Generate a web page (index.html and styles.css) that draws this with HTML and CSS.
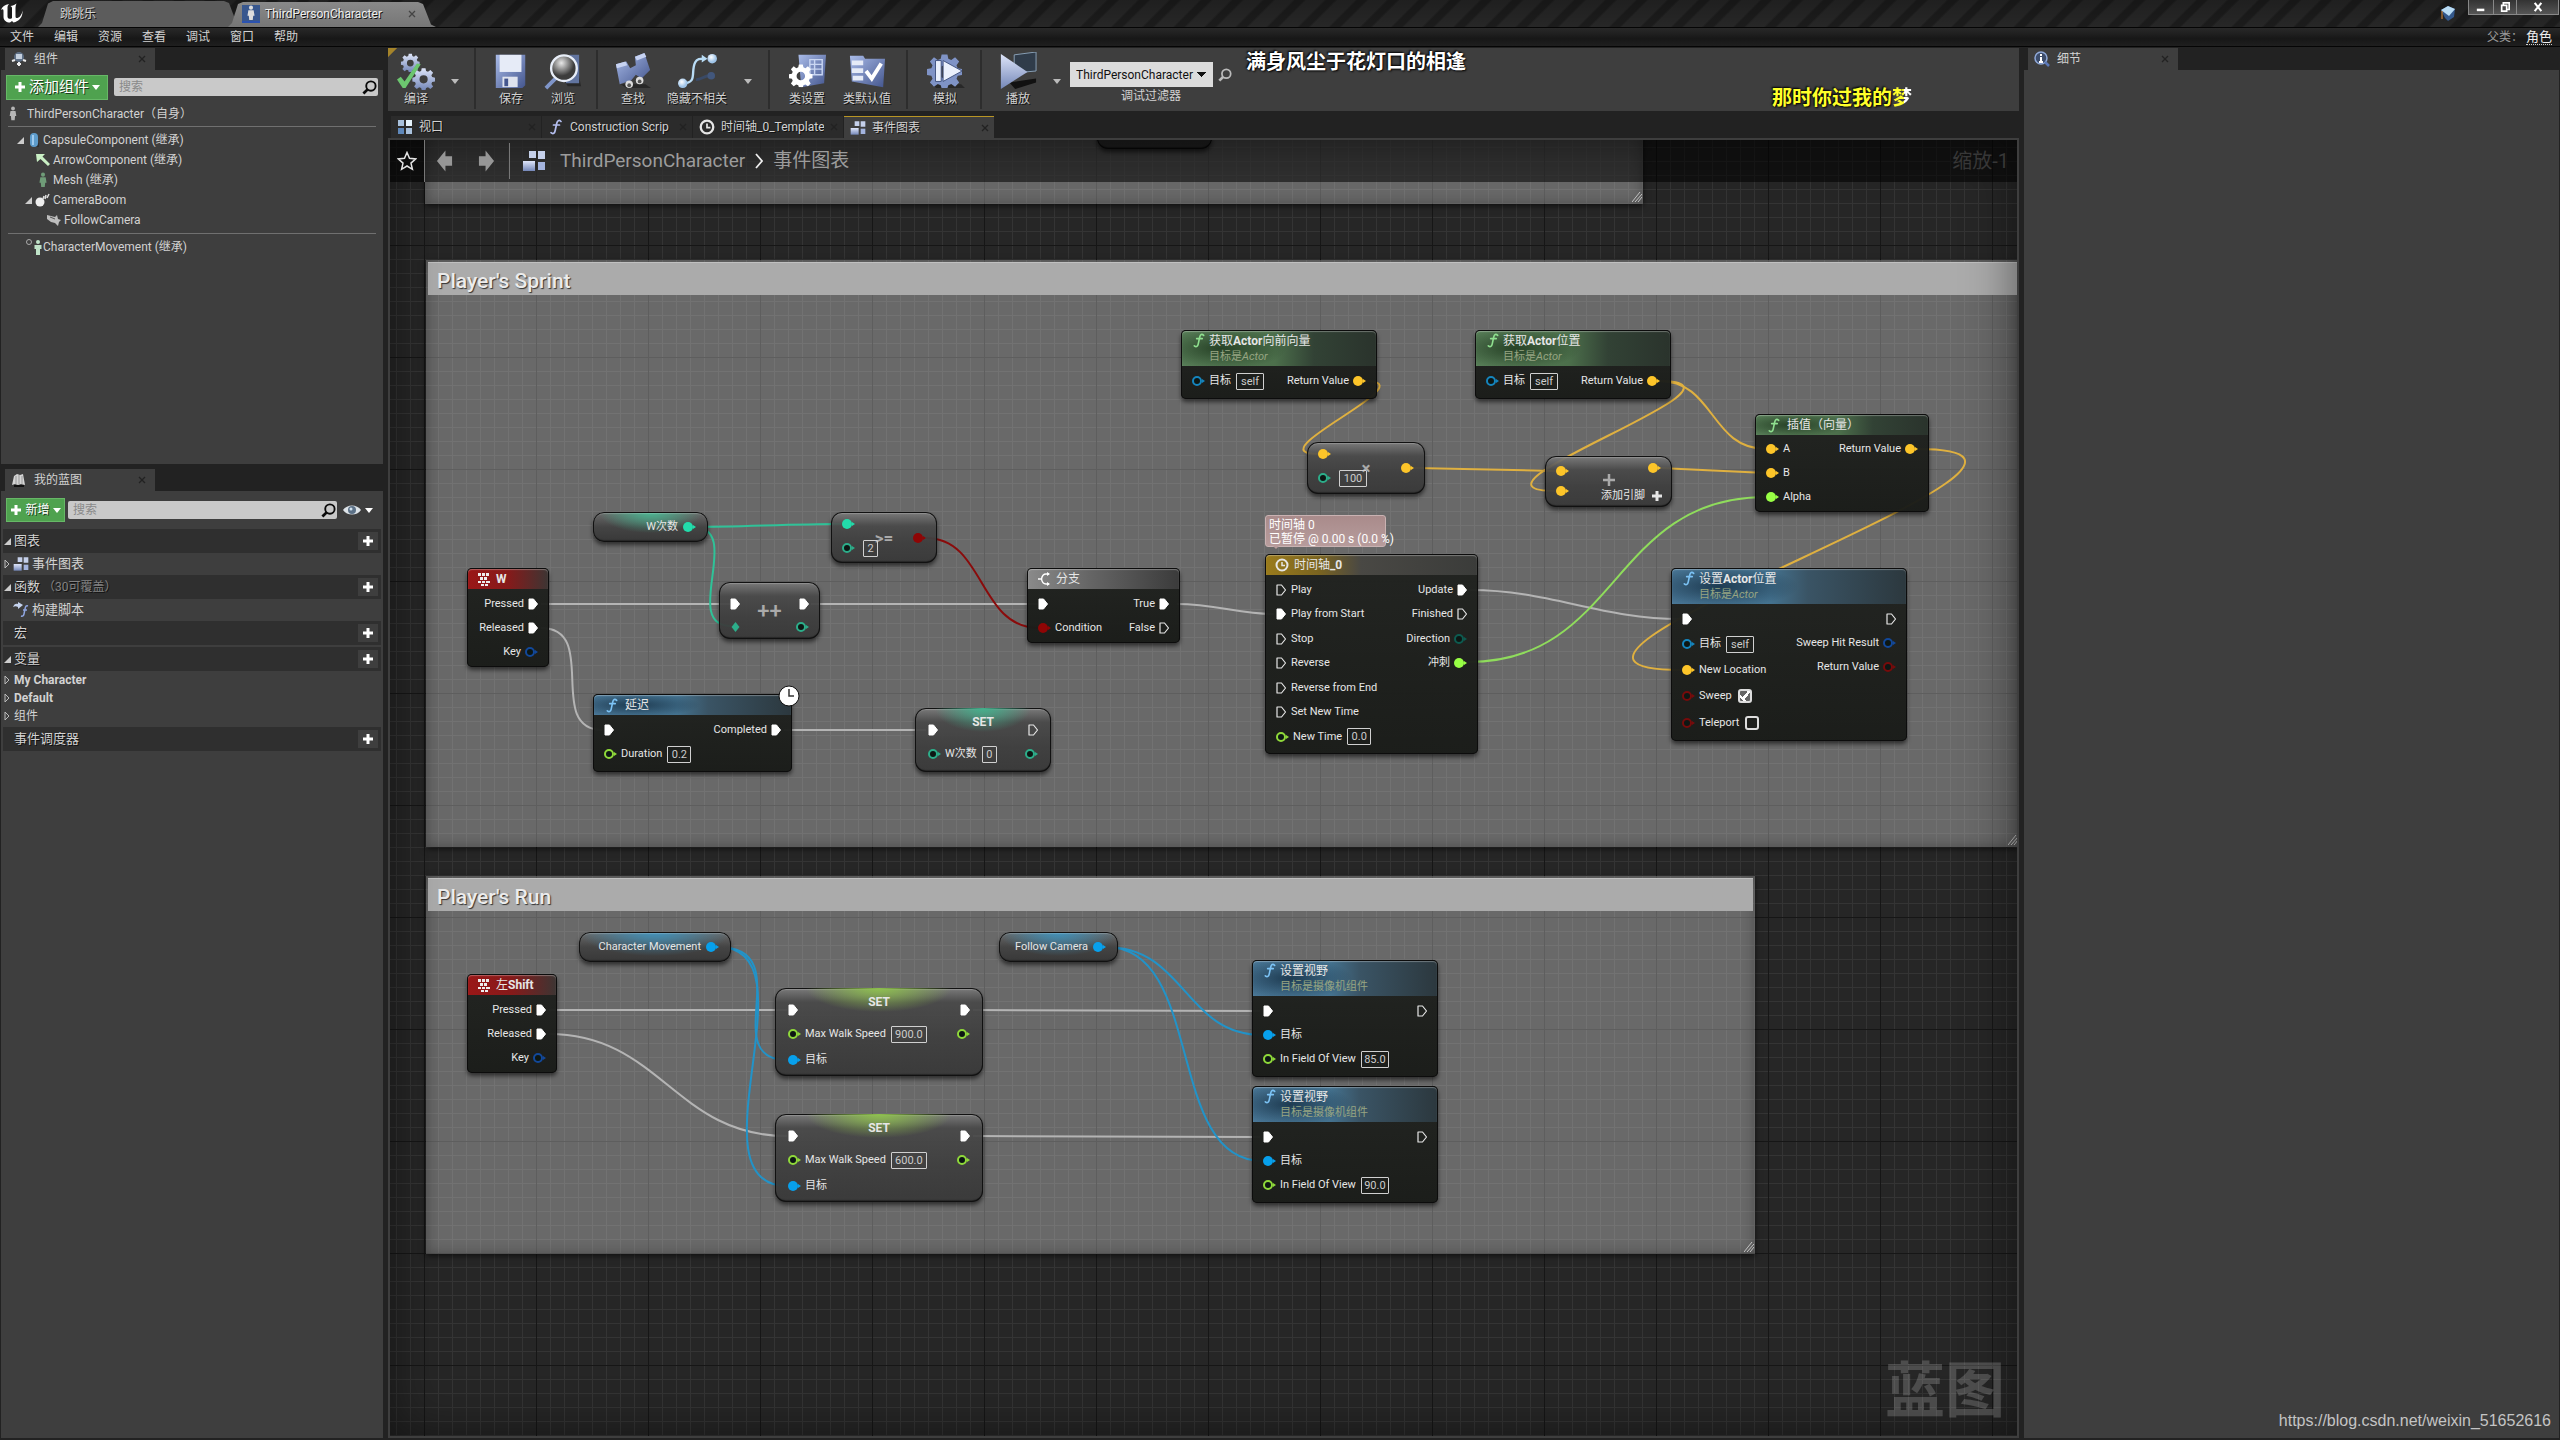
FILE: index.html
```html
<!DOCTYPE html>
<html lang="zh-CN">
<head>
<meta charset="utf-8">
<title>ThirdPersonCharacter</title>
<link rel="stylesheet" href="styles.css">
</head>
<body>
<svg class="defs" aria-hidden="true">
  <defs>
    <linearGradient id="steel" x1="0" y1="0" x2="0" y2="1"><stop offset="0" stop-color="#dfe6fa"/><stop offset="1" stop-color="#7487b8"/></linearGradient>
    <linearGradient id="blue" x1="0" y1="0" x2="1" y2="1"><stop offset="0" stop-color="#a9bbe8"/><stop offset="1" stop-color="#44568e"/></linearGradient>
    <radialGradient id="lens" cx=".4" cy=".3"><stop offset="0" stop-color="#e8e8e8"/><stop offset="1" stop-color="#3c3c3c"/></radialGradient>
    <radialGradient id="ball" cx=".4" cy=".35"><stop offset="0" stop-color="#fff"/><stop offset="1" stop-color="#9fc4e8"/></radialGradient>
  </defs>
  <symbol id="exec" viewBox="0 0 10 12"><path d="M1 1h4.500l4 5-4 5H1z" fill="#fff" stroke="#fff" stroke-linejoin="round"/></symbol>
  <symbol id="exec-open" viewBox="0 0 10 12"><path d="M1 1h4.500l4 5-4 5H1z" fill="none" stroke="#e8e8e8" stroke-width="1.200" stroke-linejoin="round"/></symbol>
  <symbol id="dot" viewBox="0 0 13 12"><circle cx="5" cy="6" r="5" fill="currentColor"/><path d="M10 4l3 2-3 2z" fill="currentColor"/></symbol>
  <symbol id="ring" viewBox="0 0 13 12"><circle cx="5" cy="6" r="4" fill="#0d1714" stroke="currentColor" stroke-width="2"/><path d="M10 4l3 2-3 2z" fill="currentColor"/></symbol>
  <symbol id="diamond" viewBox="0 0 13 12"><path d="M5.500 1l4 5-4 5-4-5z" fill="currentColor"/></symbol>
  <symbol id="func" viewBox="0 0 12 16"><path d="M11 2.500C9 .5 7.300 1.600 6.700 4.500L5.200 11.500C4.700 14.300 3.200 15.500 1 13.700M3.500 6h6" fill="none" stroke="currentColor" stroke-width="1.700" stroke-linecap="round"/></symbol>
  <symbol id="keys" viewBox="0 0 14 14"><path d="M1 1h3v3H1zM5 1h3v3H5zM9 1h3v3H9zM3 5h3v3H3zM7 5h3v3H7zM1 9h3v2H1zM5 9h3v2H5zM9 9h4v2H9zM4 12h3v2H4zM8 12h3v2H8z" fill="#eee"/></symbol>
  <symbol id="plus" viewBox="0 0 12 12"><path d="M4.500 1h3v3.500H11v3H7.500V11h-3V7.500H1v-3h3.500z" fill="currentColor"/></symbol>
  <symbol id="caret" viewBox="0 0 10 6"><path d="M0 0h10L5 6z" fill="currentColor"/></symbol>
  <symbol id="open" viewBox="0 0 8 8"><path d="M8 0v8H0z" fill="#ccc"/></symbol>
  <symbol id="closed" viewBox="0 0 6 10"><path d="M1 1l4 4-4 4z" fill="none" stroke="#bbb"/></symbol>
  <symbol id="close" viewBox="0 0 8 8"><path d="M1 1l6 6M7 1L1 7" stroke="currentColor" stroke-width="1.300"/></symbol>
  <symbol id="lookup" viewBox="0 0 16 16"><circle cx="9.500" cy="6.500" r="5" fill="none" stroke="currentColor" stroke-width="2"/><path d="M6 10l-4.500 4.500" stroke="currentColor" stroke-width="3"/></symbol>
  <symbol id="man" viewBox="0 0 12 18"><circle cx="6" cy="3" r="2.300" fill="currentColor"/><path d="M3 6h6l1 6H8.500L8 17H4l-.5-5H2z" fill="currentColor"/></symbol>
  <symbol id="graph" viewBox="0 0 24 22"><path d="M7 1h7v7H7zM16 1h7v8h-7z" fill="#c5d0ea"/><path d="M1 11h12v10H1z" fill="url(#steel)"/><path d="M16 12h7v8h-7z" fill="#a3b3dd"/></symbol>
  <symbol id="clock" viewBox="0 0 14 14"><circle cx="7" cy="7" r="5.500" fill="none" stroke="currentColor" stroke-width="2"/><path d="M7 4v3.500h3" fill="none" stroke="currentColor" stroke-width="1.500"/></symbol>
  <symbol id="grip" viewBox="0 0 10 10"><path d="M0 10L8 0M3 10l7-8M6 10l4-5" stroke="#c4c4c4" stroke-width="1"/></symbol>
  <symbol id="gear" viewBox="0 0 24 24"><path fill-rule="evenodd" d="M10 1h4l.6 3 2 .8L19.200 3 22 5.800l-1.800 2.600.8 2 3 .6v4l-3 .6-.8 2L22 20.200 19.200 23l-2.600-1.800-2 .8-.6 2h-4l-.6-2-2-.8L4.800 23 2 20.200l1.800-2.600-.8-2L0 15v-4l3-.6.8-2L2 5.800 4.800 3l2.600 1.800 2-.8zM12 8.500a4.300 4.300 0 100 8.600 4.300 4.300 0 000-8.600z"/></symbol>
</svg>

<header class="titlebar">
  <svg class="logo" viewBox="0 0 24 22"><path d="M1 8C2 4.500 5 2.500 9 2 7.500 3.500 7.500 5 7.500 6.500v8c0 2.500 3 3 4.500 1.500V6.500c0-1.500-.5-2-1.500-2.500 2-.2 4-1 6-2.500-.7 1.700-1 3-1 4.500v8.500c0 1.500 1.500 2 2.500 1.300C20 15 22 12.500 22.500 8.500 23 15 19 19.500 13.500 20.500L12 19l-2 1.500C6.500 20.500 3.500 18.500 3.500 15V9c0-2-1-2.500-2.500-1z" fill="#fff"/></svg>
  <nav class="windowtabs">
    <a class="wtab" href="#level">跳跳乐</a>
    <a class="wtab wtab-on" href="#character"><span class="thumb"><svg><use href="#man"/></svg></span>ThirdPersonCharacter<svg class="x"><use href="#close"/></svg></a>
  </nav>
  <svg class="cap" viewBox="0 0 18 18"><path d="M2 6l7-4 7 3-1 8-6 4-3-3z" fill="#33588c"/><path d="M2 6l7-4 7 3-6 7z" fill="#b9dcf5"/><path d="M3 7v8" stroke="#d98b3c"/></svg>
  <div class="winbtns">
    <button class="wb" aria-label="最小化"><svg viewBox="0 0 12 12"><path d="M1 8h9v3H1z" fill="#fff"/></svg></button><button class="wb wb-mid" aria-label="还原"><svg viewBox="0 0 12 12"><path d="M4 3V1h7v8H9M2 4h6v7H2z" fill="none" stroke="#fff" stroke-width="2"/></svg></button><button class="wb wb-close" aria-label="关闭"><svg viewBox="0 0 12 12"><path d="M2 1l8 10M10 1L2 11" stroke="#fff" stroke-width="2.500"/></svg></button>
  </div>
</header>

<nav class="menubar">
  <button>文件</button><button>编辑</button><button>资源</button><button>查看</button><button>调试</button><button>窗口</button><button>帮助</button>
  <span class="parent">父类： <a href="#parent">角色</a></span>
</nav>

<main class="workspace">
  <aside class="side">
    <section class="dock dock-components">
      <h2 class="docktab"><svg class="i16" viewBox="0 0 16 16"><circle cx="8" cy="6" r="5" fill="#5f7086"/><path d="M5 3h6v5H5z" fill="#c4cfdd"/><path d="M1 10l3-1M15 10l-3-1M8 11v4M6 13h4" stroke="#eee" stroke-width="2"/></svg>组件<svg class="x"><use href="#close"/></svg></h2>
      <div class="panel">
        <div class="panelbar">
          <button class="green green-lg"><svg class="i12"><use href="#plus"/></svg>添加组件<svg class="car"><use href="#caret"/></svg></button>
          <div class="search"><input type="text" placeholder="搜索" aria-label="搜索组件"><svg><use href="#lookup"/></svg></div>
        </div>
        <ul class="tree">
          <li class="root"><svg class="i-man pale"><use href="#man"/></svg>ThirdPersonCharacter（自身）</li>
          <li class="lv1"><svg class="tri"><use href="#open"/></svg><svg class="i14" viewBox="0 0 14 14"><path d="M7 3l5 8v3H6z" fill="#222" opacity=".6"/><rect x="3" y="0" width="8" height="14" rx="4" fill="#5e9ccb"/><path d="M6 2v10" stroke="#9fcbee" stroke-width="2"/></svg>CapsuleComponent (继承)</li>
          <li class="lv2"><svg class="i16" viewBox="0 0 16 14"><path d="M1 1h9L7.500 3.500 15 11l-2 2-7.500-7L2 9z" fill="#c9efc4"/></svg>ArrowComponent (继承)</li>
          <li class="lv2"><svg class="i16 mesh"><use href="#man"/></svg>Mesh (继承)</li>
          <li class="lv2 lv2-open"><svg class="tri"><use href="#open"/></svg><svg class="i16" viewBox="0 0 16 14"><circle cx="5" cy="9" r="4.500" fill="#eee"/><path d="M8 6l1-3M10 6l1-4M12 5l2-4" stroke="#ddd" stroke-width="1.500"/></svg>CameraBoom</li>
          <li class="lv3"><svg class="i16" viewBox="0 0 16 14"><path d="M1 2l8 2 2-2 1 4 3 1-2 2-1 4-3-3-4-1-4-3z" fill="#bdbdbd"/><path d="M4 4l5 2" stroke="#555"/></svg>FollowCamera</li>
          <li class="move"><svg class="i16" viewBox="0 0 16 16"><circle cx="3" cy="3" r="2.500" fill="none" stroke="#aaa"/><circle cx="12" cy="3" r="2" fill="#bfe3c8"/><path d="M8.500 6h7v4h-1.500v6h-4v-6H8.500z" fill="#bfe3c8"/></svg>CharacterMovement (继承)</li>
        </ul>
      </div>
    </section>
    <section class="dock dock-blueprint">
      <h2 class="docktab"><svg class="i16" viewBox="0 0 16 16"><path d="M1 13L3 4l3-2 3 1 3-1 2 11-4-1-3 1-3-1z" fill="#d5d5d5"/><path d="M3 14l10 0" stroke="#111" stroke-width="2"/><path d="M5 4v8M8 3v9M11 4v8" stroke="#999"/></svg>我的蓝图<svg class="x"><use href="#close"/></svg></h2>
      <div class="panel">
        <div class="panelbar panelbar-tall">
          <button class="green"><svg class="i12"><use href="#plus"/></svg>新增<svg class="car"><use href="#caret"/></svg></button>
          <div class="search"><input type="text" placeholder="搜索" aria-label="搜索蓝图"><svg><use href="#lookup"/></svg></div>
          <button class="eye" aria-label="视图选项"><svg class="eyeball" viewBox="0 0 18 12"><path d="M0 6C4 0 14 0 18 6c-4 6-14 6-18 0z" fill="#dde3e8"/><circle cx="9" cy="6" r="4" fill="#5c7187"/><circle cx="8" cy="5" r="1.500" fill="#cfe0ee"/></svg><svg class="car"><use href="#caret"/></svg></button>
        </div>
        <div class="cats">
          <h3><svg class="tri"><use href="#open"/></svg>图表<button aria-label="添加图表"><svg class="i12"><use href="#plus"/></svg></button></h3>
          <p class="entry"><svg class="shut"><use href="#closed"/></svg><svg class="i16"><use href="#graph"/></svg>事件图表</p>
          <h3><svg class="tri"><use href="#open"/></svg>函数<small>（30可覆盖）</small><button aria-label="添加函数"><svg class="i12"><use href="#plus"/></svg></button></h3>
          <p class="entry entry-fn"><svg class="i16" viewBox="0 0 16 16"><path d="M0 5C1 2 3 1 5 2V0l5 3-5 4V5C3 4 2 4 0 5z" fill="#c5d3ee"/><path d="M15 4c-2-.7-2.500.5-3 3l-1 5c-.4 2-1.500 2.500-3 2M10 8h4" fill="none" stroke="#8fa5e0" stroke-width="1.500"/></svg>构建脚本</p>
          <h3 class="plain last">宏<button aria-label="添加宏"><svg class="i12"><use href="#plus"/></svg></button></h3>
          <h3><svg class="tri"><use href="#open"/></svg>变量<button aria-label="添加变量"><svg class="i12"><use href="#plus"/></svg></button></h3>
          <p class="var"><svg class="shut"><use href="#closed"/></svg><b>My Character</b></p>
          <p class="var"><svg class="shut"><use href="#closed"/></svg><b>Default</b></p>
          <p class="var"><svg class="shut"><use href="#closed"/></svg>组件</p>
          <h3 class="plain">事件调度器<button aria-label="添加事件调度器"><svg class="i12"><use href="#plus"/></svg></button></h3>
        </div>
      </div>
    </section>
  </aside>

  <section class="editor">
    <div class="toolbar">
      <div class="tgroup first">
        <button class="tool t56"><svg viewBox="0 0 42 40"><g fill="url(#steel)"><use href="#gear" x="5" y="1" width="20" height="20"/><use href="#gear" x="17" y="16" width="24" height="24"/></g><path d="M1 29l4-3 4 5L22 12l4 1L10 38H7z" fill="#6cc66f"/></svg>编译</button>
        <button class="drop d22" aria-label="编译选项"><svg class="car"><use href="#caret"/></svg></button>
      </div>
      <div class="tgroup">
        <button class="tool t52"><svg viewBox="0 0 42 40"><path d="M5 3h31v32l-3 3H5z" fill="url(#blue)"/><path d="M9 3h23v18H9z" fill="#e6ebf7"/><path d="M12 26h16v11H12z" fill="#dfe3ee"/><path d="M14 28h4v8h-4z" fill="#44568e"/></svg>保存</button>
        <button class="tool t52"><svg viewBox="0 0 42 40"><path d="M20 26h18l2 10H26z" fill="#111" opacity=".5"/><path d="M28 3h10v30H24z" fill="#61749f"/><path d="M15 26L3 38" stroke="#7f95c9" stroke-width="4"/><circle cx="22" cy="17" r="13.500" fill="url(#lens)" stroke="#e8eef8" stroke-width="2.500"/></svg>浏览</button>
      </div>
      <div class="tgroup">
        <button class="tool t52"><svg viewBox="0 0 42 40"><path d="M8 34h26l6 4H14z" fill="#111" opacity=".5"/><path d="M3 13l11-3 4 7 6-3-1-9 10-4 6 18-9 9-6-4-5 6-12 4z" fill="url(#blue)"/><path d="M3 13l10-3 2 4-11 3zM23 5l10-4 2 4-10 4z" fill="#c7d3f2"/><circle cx="17" cy="34" r="4" fill="#ddd"/><circle cx="28" cy="30" r="4" fill="#ddd"/><circle cx="17" cy="35" r="2" fill="#555"/><circle cx="28" cy="31" r="2" fill="#555"/></svg>查找</button>
        <button class="tool t76"><svg viewBox="0 0 42 40"><path d="M6 33c16 0 8-12 13-22 2-4 5-4 10-4" fill="none" stroke="#b9dcf5" stroke-width="2.500"/><path d="M20 29c6 0 8-4 14-4" stroke="#3a4a66" stroke-width="3" fill="none"/><circle cx="36" cy="25" r="4" fill="#42577c"/><path d="M26 3l6 4-6 4z" fill="#b9dcf5"/><circle cx="6" cy="33" r="5" fill="url(#ball)"/><circle cx="37" cy="7" r="5" fill="url(#ball)"/></svg>隐藏不相关</button>
        <button class="drop d26" aria-label="隐藏选项"><svg class="car"><use href="#caret"/></svg></button>
      </div>
      <div class="tgroup">
        <button class="tool t56"><svg viewBox="0 0 42 40"><path d="M12 3h29l-2 30-24 4z" fill="url(#blue)"/><path d="M24 8h13v16H24zM24 13h13M24 18h13M29 8v16" fill="none" stroke="#c9d6f2" stroke-width="1.500"/><use href="#gear" x="2" y="12" width="25" height="25" fill="#fff"/></svg>类设置</button>
        <button class="tool t64"><svg viewBox="0 0 42 40"><path d="M3 4h14l2 3h21l-2 30L5 31z" fill="url(#blue)"/><path d="M5 9h12v5H5zM5 17h12v5H5zM6 25h11v5H6z" fill="#e6ebf7"/><path d="M20 20l6 8L36 12" fill="none" stroke="#fff" stroke-width="4"/></svg>类默认值</button>
      </div>
      <div class="tgroup">
        <button class="tool t56"><svg viewBox="0 0 42 40"><path d="M6 34h32l4 4H12z" fill="#111" opacity=".5"/><use href="#gear" x="2" y="1" width="37" height="37" fill="#7f93c6"/><path d="M11 9h6v22h-6zM19 9l20 11-20 11z" fill="#eaf0fc" stroke="#40527f"/></svg>模拟</button>
      </div>
      <div class="tgroup last">
        <button class="tool t52"><svg viewBox="0 0 42 40"><path d="M12 32l28-4v4l-22 7z" fill="#111"/><path d="M17 3l23-3v20l-23 2z" fill="#303c4a" stroke="#8ba2b8"/><path d="M3 2l28 19L3 39z" fill="url(#steel)"/></svg>播放</button>
        <button class="drop d26" aria-label="播放选项"><svg class="car"><use href="#caret"/></svg></button>
        <div class="filter"><div class="filterrow"><select id="dbg"><option>ThirdPersonCharacter</option></select><svg class="flens"><use href="#lookup"/></svg></div><label for="dbg">调试过滤器</label></div>
      </div>
      <p class="lyric lyric-a">满身风尘于花灯口的相逢</p>
      <p class="lyric lyric-b">那时你过我的<span>梦</span></p>
    </div>

    <nav class="doctabs">
      <a href="#viewport"><svg class="i16" viewBox="0 0 16 16"><path d="M1 1h6v6H1zM9 9h6v6H9z" fill="#a9c1dc"/><path d="M9 1h6v6H9z" fill="#e4f2fb"/><path d="M1 9h6v6H1z" fill="#5f88ba"/></svg><span>视口</span><svg class="x"><use href="#close"/></svg></a>
      <a href="#script"><svg class="i16 lilac"><use href="#func"/></svg><span>Construction Scrip</span><svg class="x"><use href="#close"/></svg></a>
      <a href="#timeline"><svg class="i16 white"><use href="#clock"/></svg><span>时间轴_0_Template</span><svg class="x"><use href="#close"/></svg></a>
      <a class="on" href="#graph"><svg class="i16"><use href="#graph"/></svg><span>事件图表</span><svg class="x"><use href="#close"/></svg></a>
    </nav>

    <div class="graph">
      <div class="board">
        <section class="comment c-top"><svg class="grip"><use href="#grip"/></svg></section>
        <section class="comment c-sprint"><h2>Player's Sprint</h2><svg class="grip"><use href="#grip"/></svg></section>
        <section class="comment c-run"><h2>Player's Run</h2><svg class="grip"><use href="#grip"/></svg></section>
        <div class="node soft n-stub"></div>

        <svg class="wires">
          <g stroke="#b4b4b4">
            <path d="M541 604H730M811 604H1038M784 730H926M549 1010H787M973 1010L1260 1011M973 1136L1260 1137"/>
            <path d="M541 628C600 628 545 729 602 730"/>
            <path d="M1177 604C1215 604 1240 614 1274 614"/>
            <path d="M1470 590C1550 590 1600 619 1681 619"/>
            <path d="M549 1034C660 1034 675 1136 787 1136"/>
          </g>
          <g stroke="#2fc298"><path d="M693 527C740 527 790 524 841 524"/><path d="M693 527C745 527 680 626 731 626"/></g>
          <path stroke="#8a0b0b" d="M926 538C985 538 978 627 1038 628"/>
          <g stroke="#dfb040">
            <path d="M1365 381C1430 381 1253 454 1318 454"/>
            <path d="M1659 381C1775 381 1440 491 1556 491"/>
            <path d="M1659 381C1715 381 1710 449 1766 449"/>
            <path d="M1414 468L1556 471M1660 468L1766 473"/>
            <path d="M1917 449C2150 449 1448 670 1681 670"/>
          </g>
          <path stroke="#8fdc5c" d="M1468 662C1620 662 1610 497 1766 497"/>
          <g stroke="#2293c8">
            <path d="M718 947C800 947 716 1060 787 1060"/>
            <path d="M718 947C818 947 687 1186 787 1186"/>
            <path d="M1106 947C1185 947 1185 1035 1262 1035"/>
            <path d="M1106 947C1205 947 1165 1161 1262 1161"/>
          </g>
        </svg>

        <article class="node n-w"><h4 class="red"><svg class="i14"><use href="#keys"/></svg><b>W</b></h4>
          <div class="body"><div class="outs"><p>Pressed<svg class="ex"><use href="#exec"/></svg></p><p>Released<svg class="ex"><use href="#exec"/></svg></p><p>Key<svg class="pt navy"><use href="#ring"/></svg></p></div></div></article>

        <article class="node soft getter g-teal n-count"><p>W次数<svg class="pt teal"><use href="#dot"/></svg></p></article>

        <article class="node soft op n-gte"><strong>&gt;=</strong><div class="body"><div class="ins"><p><svg class="pt teal"><use href="#dot"/></svg></p><p><svg class="pt tealring"><use href="#ring"/></svg><input class="w1 off" value="2" aria-label="B"></p></div><div class="outs mid"><p><svg class="pt red-pin"><use href="#dot"/></svg></p></div></div></article>

        <article class="node soft op n-inc"><strong class="big">++</strong><div class="body"><div class="ins"><p><svg class="ex"><use href="#exec"/></svg></p><p><svg class="pt tealring"><use href="#diamond"/></svg></p></div><div class="outs"><p><svg class="ex"><use href="#exec"/></svg></p><p><svg class="pt tealring"><use href="#ring"/></svg></p></div></div></article>

        <article class="node n-branch"><h4 class="gray"><svg class="i14" viewBox="0 0 14 14"><path d="M1 7h3M12 2H9C6 2 5 4 4.500 7 5 10 6 12 9 12h3" fill="none" stroke="#fff" stroke-width="1.500"/><path d="M10 0l3 2-3 2zM10 10l3 2-3 2z" fill="#fff"/></svg>分支</h4>
          <div class="body"><div class="ins"><p><svg class="ex"><use href="#exec"/></svg></p><p><svg class="pt red-pin"><use href="#dot"/></svg>Condition</p></div><div class="outs"><p>True<svg class="ex"><use href="#exec"/></svg></p><p>False<svg class="ex"><use href="#exec-open"/></svg></p></div></div></article>

        <article class="node n-delay"><h4 class="blue"><svg class="fn"><use href="#func"/></svg>延迟</h4>
          <div class="body"><div class="ins"><p><svg class="ex"><use href="#exec"/></svg></p><p><svg class="pt lime"><use href="#ring"/></svg><label for="dur">Duration</label><input id="dur" class="w3" value="0.2"></p></div><div class="outs"><p>Completed<svg class="ex"><use href="#exec"/></svg></p></div></div>
          <svg class="badge" viewBox="0 0 22 22"><circle cx="11" cy="11" r="10" fill="#fff" stroke="#111"/><path d="M11 4v7h5" fill="none" stroke="#333" stroke-width="1.500"/></svg></article>

        <article class="node soft set s-teal n-setw"><h5>SET</h5><div class="body"><div class="ins"><p><svg class="ex"><use href="#exec"/></svg></p><p><svg class="pt tealring"><use href="#ring"/></svg><label for="cnt">W次数</label><input id="cnt" class="w1" value="0"></p></div><div class="outs"><p><svg class="ex"><use href="#exec-open"/></svg></p><p><svg class="pt tealring"><use href="#ring"/></svg></p></div></div></article>

        <article class="node n-fwd"><h4 class="green-h two"><svg class="fn"><use href="#func"/></svg><span>获取<b>Actor</b>向前向量<small>目标是<i>Actor</i></small></span></h4>
          <div class="body"><div class="ins"><p><svg class="pt sky"><use href="#ring"/></svg><label for="s1">目标</label><input id="s1" class="w4" value="self"></p></div><div class="outs"><p>Return Value<svg class="pt gold"><use href="#dot"/></svg></p></div></div></article>

        <article class="node n-loc"><h4 class="green-h two"><svg class="fn"><use href="#func"/></svg><span>获取<b>Actor</b>位置<small>目标是<i>Actor</i></small></span></h4>
          <div class="body"><div class="ins"><p><svg class="pt sky"><use href="#ring"/></svg><label for="s2">目标</label><input id="s2" class="w4" value="self"></p></div><div class="outs"><p>Return Value<svg class="pt gold"><use href="#dot"/></svg></p></div></div></article>

        <article class="node soft op n-mul"><strong>×</strong><div class="body"><div class="ins"><p><svg class="pt gold"><use href="#dot"/></svg></p><p><svg class="pt tealring"><use href="#ring"/></svg><input class="w4 off" value="100" aria-label="倍数"></p></div><div class="outs mid"><p><svg class="pt gold"><use href="#dot"/></svg></p></div></div></article>

        <article class="node soft op n-add"><svg class="sum" viewBox="0 0 12 12"><path d="M6 0v12M0 6h12" stroke="#aaa" stroke-width="2.500"/></svg><div class="body"><div class="ins"><p><svg class="pt gold"><use href="#dot"/></svg></p><p><svg class="pt gold"><use href="#dot"/></svg></p></div><div class="outs"><p><svg class="pt gold"><use href="#dot"/></svg></p><button class="addpin">添加引脚<svg class="i12"><use href="#plus"/></svg></button></div></div></article>

        <div class="bubble">时间轴 0<br>已暂停 @ 0.00 s (0.0 %)</div>

        <article class="node n-time"><h4 class="amber"><svg class="i14"><use href="#clock"/></svg><span>时间轴<b>_0</b></span></h4>
          <div class="body"><div class="ins"><p><svg class="ex"><use href="#exec-open"/></svg>Play</p><p><svg class="ex"><use href="#exec"/></svg>Play from Start</p><p><svg class="ex"><use href="#exec-open"/></svg>Stop</p><p><svg class="ex"><use href="#exec-open"/></svg>Reverse</p><p><svg class="ex"><use href="#exec-open"/></svg>Reverse from End</p><p><svg class="ex"><use href="#exec-open"/></svg>Set New Time</p><p><svg class="pt lime"><use href="#ring"/></svg><label for="nt">New Time</label><input id="nt" class="w3" value="0.0"></p></div>
          <div class="outs"><p>Update<svg class="ex"><use href="#exec"/></svg></p><p>Finished<svg class="ex"><use href="#exec-open"/></svg></p><p>Direction<svg class="pt dteal"><use href="#ring"/></svg></p><p>冲刺<svg class="pt limefull"><use href="#dot"/></svg></p></div></div></article>

        <article class="node n-lerp"><h4 class="green-h"><svg class="fn"><use href="#func"/></svg>插值（向量）</h4>
          <div class="body"><div class="ins"><p><svg class="pt gold"><use href="#dot"/></svg>A</p><p><svg class="pt gold"><use href="#dot"/></svg>B</p><p><svg class="pt limefull"><use href="#dot"/></svg>Alpha</p></div><div class="outs"><p>Return Value<svg class="pt gold"><use href="#dot"/></svg></p></div></div></article>

        <article class="node n-setloc"><h4 class="blue two"><svg class="fn"><use href="#func"/></svg><span>设置<b>Actor</b>位置<small>目标是<i>Actor</i></small></span></h4>
          <div class="body"><div class="ins"><p><svg class="ex"><use href="#exec"/></svg></p><p><svg class="pt sky"><use href="#ring"/></svg><label for="s3">目标</label><input id="s3" class="w4" value="self"></p><p><svg class="pt gold"><use href="#dot"/></svg>New Location</p><p><svg class="pt maroon"><use href="#ring"/></svg><label for="sw">Sweep</label><input id="sw" type="checkbox" checked></p><p><svg class="pt maroon"><use href="#ring"/></svg><label for="tp">Teleport</label><input id="tp" type="checkbox"></p></div>
          <div class="outs"><p><svg class="ex"><use href="#exec-open"/></svg></p><p>Sweep Hit Result<svg class="pt navy"><use href="#ring"/></svg></p><p>Return Value<svg class="pt maroon"><use href="#ring"/></svg></p></div></div></article>

        <article class="node n-shift"><h4 class="red"><svg class="i14"><use href="#keys"/></svg><span>左<b>Shift</b></span></h4>
          <div class="body"><div class="outs"><p>Pressed<svg class="ex"><use href="#exec"/></svg></p><p>Released<svg class="ex"><use href="#exec"/></svg></p><p>Key<svg class="pt navy"><use href="#ring"/></svg></p></div></div></article>

        <article class="node soft getter g-blue n-cm"><p>Character Movement<svg class="pt azure"><use href="#dot"/></svg></p></article>
        <article class="node soft getter g-blue n-fc"><p>Follow Camera<svg class="pt azure"><use href="#dot"/></svg></p></article>

        <article class="node soft set s-lime n-set9"><h5>SET</h5><div class="body"><div class="ins"><p><svg class="ex"><use href="#exec"/></svg></p><p><svg class="pt lime"><use href="#ring"/></svg><label for="m9">Max Walk Speed</label><input id="m9" class="w5" value="900.0"></p><p><svg class="pt azure"><use href="#dot"/></svg>目标</p></div><div class="outs"><p><svg class="ex"><use href="#exec"/></svg></p><p><svg class="pt lime"><use href="#ring"/></svg></p></div></div></article>
        <article class="node soft set s-lime n-set6"><h5>SET</h5><div class="body"><div class="ins"><p><svg class="ex"><use href="#exec"/></svg></p><p><svg class="pt lime"><use href="#ring"/></svg><label for="m6">Max Walk Speed</label><input id="m6" class="w5" value="600.0"></p><p><svg class="pt azure"><use href="#dot"/></svg>目标</p></div><div class="outs"><p><svg class="ex"><use href="#exec"/></svg></p><p><svg class="pt lime"><use href="#ring"/></svg></p></div></div></article>

        <article class="node n-fov1"><h4 class="blue two"><svg class="fn"><use href="#func"/></svg><span>设置视野<small>目标是摄像机组件</small></span></h4>
          <div class="body"><div class="ins"><p><svg class="ex"><use href="#exec"/></svg></p><p><svg class="pt azure"><use href="#dot"/></svg>目标</p><p><svg class="pt lime"><use href="#ring"/></svg><label for="f1">In Field Of View</label><input id="f1" class="w4" value="85.0"></p></div><div class="outs"><p><svg class="ex"><use href="#exec-open"/></svg></p></div></div></article>
        <article class="node n-fov2"><h4 class="blue two"><svg class="fn"><use href="#func"/></svg><span>设置视野<small>目标是摄像机组件</small></span></h4>
          <div class="body"><div class="ins"><p><svg class="ex"><use href="#exec"/></svg></p><p><svg class="pt azure"><use href="#dot"/></svg>目标</p><p><svg class="pt lime"><use href="#ring"/></svg><label for="f2">In Field Of View</label><input id="f2" class="w4" value="90.0"></p></div><div class="outs"><p><svg class="ex"><use href="#exec-open"/></svg></p></div></div></article>
      </div>
      <div class="vignette"></div>
      <p class="stamp">蓝图</p>
      <div class="crumbs">
        <button class="star" aria-label="收藏"><svg viewBox="0 0 20 20"><path d="M10 1.500l2.500 5.800 6.300.6-4.800 4.200 1.400 6.200L10 15l-5.400 3.300L6 12.100 1.200 7.900l6.300-.6z" fill="none" stroke="#e5e5e5" stroke-width="1.500"/></svg></button>
        <div class="crumbrow">
          <button class="nav" aria-label="后退"><svg viewBox="0 0 18 22"><path d="M1 11L10 0v6h7v10h-7v6z" fill="#969696"/></svg></button>
          <button class="nav" aria-label="前进"><svg viewBox="0 0 18 22"><path d="M17 11L8 0v6H1v10h7v6z" fill="#969696"/></svg></button>
          <div class="path"><svg class="gi"><use href="#graph"/></svg><a href="#bp">ThirdPersonCharacter</a><svg class="chev" viewBox="0 0 8 16"><path d="M1 1l6 7-6 7" fill="none" stroke="#eee" stroke-width="1.800"/></svg><a href="#eg">事件图表</a></div>
          <span class="zoom">缩放-1</span>
        </div>
      </div>
    </div>
  </section>

  <aside class="details">
    <h2 class="docktab"><svg class="i16" viewBox="0 0 16 16"><circle cx="7" cy="7" r="6" fill="#3d4d6b" stroke="#8fa8d8" stroke-width="1.500"/><path d="M11 11l4 4" stroke="#5b78b8" stroke-width="2.500"/><path d="M7 3v2M6 7h1v4M5 11h4" stroke="#fff" stroke-width="2"/></svg>细节<svg class="x"><use href="#close"/></svg></h2>
    <div class="panel"><p class="source">https://blog.csdn.net/weixin_51652616</p></div>
  </aside>
</main>
</body>
</html>
```
FILE: styles.css
```css
* { box-sizing: border-box; }
html, body { height: 100%; }
body {
  margin: 0;
  display: flex;
  flex-direction: column;
  background: #222;
  color: #d2d2d2;
  font: 12px/16px Roboto, "Noto Sans CJK SC", sans-serif;
  overflow: hidden;
}
h2, h3, h4, h5, p, ul { margin: 0; padding: 0; font-size: inherit; font-weight: 400; }
ul { list-style: none; }
a { color: inherit; text-decoration: none; }
button, input, select { font: inherit; color: inherit; padding: 0; margin: 0; border: 0; background: none; }
svg { display: block; flex: none; }
.defs { position: absolute; width: 0; height: 0; }
.i12 { width: 12px; height: 12px; }
.i14 { width: 14px; height: 14px; }
.i16 { width: 16px; height: 16px; }
.x { width: 8px; height: 8px; color: #222; margin-left: auto; }
.car { width: 8px; height: 5px; }
.tri { width: 7px; height: 7px; }
.shut { width: 6px; height: 10px; }

/* window title bar */
.titlebar {
  flex: none;
  display: flex;
  height: 27px;
  background: linear-gradient(to bottom, rgba(0,0,0,.2), transparent), repeating-linear-gradient(135deg, #272727 0 12px, #1c1c1c 14px 20px, #272727 22px);
}
.logo { width: 24px; height: 22px; margin-top: 2px; }
.windowtabs { display: flex; margin-left: 14px; padding-top: 1px; }
.wtab {
  display: flex;
  align-items: center;
  width: 200px;
  padding: 0 16px 0 22px;
  clip-path: polygon(0 100%, 4px 85%, 10px 10%, 15px 0, 186px 0, 191px 8%, 200px 100%);
  background: #5c5c5c;
  text-shadow: 1px 1px 0 #111;
}
.wtab-on {
  width: 208px;
  margin-left: -10px;
  padding: 0 20px 0 14px;
  clip-path: polygon(0 100%, 4px 85%, 10px 12%, 15px 4%, 190px 4%, 195px 12%, 203px 90%, 208px 100%);
  background: linear-gradient(#8a8a8a, #767676);
  color: #eee;
}
.wtab-on .x { color: #444; }
.thumb { display: flex; justify-content: center; width: 18px; height: 18px; margin-right: 5px; background: #38578e; border-bottom: 2px solid #2b52b0; color: #ddd; }
.thumb svg { width: 12px; height: 16px; }
.cap { width: 18px; height: 18px; margin: 4px 11px 0 auto; }
.winbtns { display: flex; margin-right: 1px; }
.wb { display: flex; align-items: center; justify-content: center; width: 26px; height: 15px; border: 1px solid #888; border-top: 0; background: linear-gradient(#333, #555); }
.wb-mid { width: 23px; border-left: 0; }
.wb-close { width: 42px; border-left: 0; }
.wb svg { width: 10px; height: 10px; }

.menubar {
  flex: none;
  display: flex;
  align-items: center;
  height: 20px;
  border: solid #050505;
  border-width: 1px 0;
  background: linear-gradient(#292929, #171717 60%, #1f1f1f);
}
.menubar button { width: 44px; }
.parent { margin-left: auto; padding-right: 8px; color: #999; }
.parent a { color: #eee; font-size: 13px; border-bottom: 1px dotted #ccc; }

.workspace {
  flex: 1;
  min-height: 0;
  display: grid;
  grid-template-columns: 382px minmax(0, 1fr) 535px;
  gap: 5px;
  padding: 1px 1px 2px;
}

/* docked panels */
.side { display: flex; flex-direction: column; gap: 5px; min-height: 0; }
.dock { display: flex; flex-direction: column; }
.dock-components { height: 416px; }
.dock-blueprint { flex: 1; }
.docktab {
  display: flex;
  align-items: center;
  gap: 7px;
  width: 150px;
  height: 22px;
  margin-left: 4px;
  padding: 0 9px 0 6px;
  background: #3e3e3e;
}
.panel { flex: 1; background: #3e3e3e; }
.panelbar { display: flex; align-items: center; gap: 6px; height: 33px; padding: 1px 5px 0; }
.panelbar-tall { height: 38px; gap: 3px; padding-top: 0; }
.green {
  display: flex;
  align-items: center;
  justify-content: center;
  gap: 3px;
  width: 59px;
  height: 24px;
  background: #4fa24f;
  border: 1px solid #67b867;
  color: #fff;
  text-shadow: 1px 1px 0 #1c3c1c;
}
.green-lg { width: 102px; height: 25px; font-size: 15px; }
.search { flex: 1; display: flex; align-items: center; height: 18px; padding: 0 1px 0 5px; background: #c9c9c9; border-radius: 2px; color: #0a0a0a; }
.search input { flex: 1; min-width: 0; outline: 0; }
.search input::placeholder { color: #8a8a8a; opacity: 1; }
.search svg { width: 15px; height: 15px; }
.eye { display: flex; align-items: center; gap: 4px; width: 35px; margin-left: 3px; color: #fff; }
.eyeball { width: 18px; height: 12px; }

.tree { margin-top: -2px; }
.tree li { display: flex; align-items: center; height: 20px; }
.tree svg { margin-right: 2px; }
.tree .tri { margin-right: 3px; }
.tree .root { height: 26px; margin: 0 7px; border-bottom: 1px solid #707070; }
.root + li { margin-top: 3px; }
.tree .i-man { width: 10px; height: 15px; margin-right: 9px; }
.pale { color: #b5b5b5; }
.mesh { color: #6f9c78; }
.tree .lv1 { padding-left: 16px; }
.lv2 { padding-left: 34px; }
.tree .lv2-open { padding-left: 24px; }
.tree .lv3 { padding-left: 45px; }
.tree .move { height: 26px; margin: 3px 7px 0; padding-left: 18px; border-top: 1px solid #707070; }
.tree .move svg { margin-right: 1px; }

.cats { padding: 0 2px; }
.cats h3 { display: flex; align-items: center; gap: 3px; height: 24px; padding: 0 3px 0 1px; background: #2f2f2f; font-size: 13px; text-shadow: 1px 1px 0 #111; }
.cats h3.plain { padding-left: 11px; }
.cats h3.last { margin-bottom: 2px; }
.cats h3 small { font-size: 12px; color: #828282; }
.cats h3 button { display: flex; align-items: center; justify-content: center; width: 20px; height: 18px; margin-left: auto; background: #3e3e3e; color: #fff; }
.entry { display: flex; align-items: center; gap: 3px; height: 22px; padding-left: 1px; font-size: 13px; }
.entry-fn { padding-left: 10px; }
.var { display: flex; align-items: center; gap: 4px; height: 18px; padding-left: 1px; }
.var b { font-weight: 700; }
.cats .var + h3 { margin-top: 2px; }

/* toolbar */
.editor { display: flex; flex-direction: column; min-height: 0; }
.toolbar { position: relative; display: flex; height: 63px; background: #3e3e3e; }
.tgroup { display: flex; padding: 0 7px 0 9px; margin: 2px 0; border-right: 2px solid #2d2d2d; }
.tgroup.first { padding: 2px 8px 0 0; margin-top: 0; background: linear-gradient(135deg, #a5842a 6px, transparent 7px); }
.tgroup.last { padding-left: 10px; border: 0; }
.tool { display: flex; flex-direction: column; align-items: center; gap: 1px; padding-top: 2px; text-shadow: 1px 1px 0 #111; }
.tool svg { width: 40px; height: 38px; }
.t52 { width: 52px; }
.t56 { width: 56px; }
.t64 { width: 64px; }
.t76 { width: 76px; }
.drop { display: flex; align-items: center; justify-content: center; padding-top: 4px; color: #bbb; }
.d22 { width: 22px; }
.d26 { width: 26px; }
.filter { display: flex; flex-direction: column; gap: 1px; padding-top: 12px; }
.filterrow { display: flex; align-items: center; gap: 5px; }
.filter select {
  appearance: none;
  width: 143px;
  height: 25px;
  padding-left: 6px;
  color: #111;
  background: conic-gradient(from -45deg at 50% 100%, #111 90deg, transparent 0) 127px 10px / 9px 5px no-repeat, #dcdcdc;
  background: conic-gradient(from 135deg at 50% 0, transparent 0) 0 0 / 0 0, conic-gradient(from -45deg at 50% 100%, #111 90deg, transparent 0) 127px 10px / 9px 5px no-repeat, #dcdcdc;
}
.flens { width: 14px; height: 14px; color: #bbb; }
.filter label { text-align: center; }
.lyric { position: absolute; font-size: 20px; line-height: 26px; font-weight: 700; color: #fff; text-shadow: 1px 1px 2px #000, -1px -1px 2px #000; }
.lyric-a { left: 858px; top: 1px; }
.lyric-b { left: 1384px; top: 37px; color: #ffff2a; }
.lyric-b span { background: linear-gradient(to right, #ffff2a 60%, #fff 60%); background-clip: text; color: transparent; text-shadow: none; }

.doctabs { display: flex; gap: 1px; height: 27px; padding: 5px 0 0 3px; }
.doctabs a { display: flex; align-items: center; gap: 6px; width: 150px; padding: 0 5px 0 6px; background: #2b2b2b; text-shadow: 1px 1px 0 #111; }
.doctabs span { flex: 1; min-width: 0; overflow: hidden; white-space: nowrap; }
.doctabs .on { background: #3e3e3e; border-top: 1px solid #b89525; }
.lilac { color: #b5bff0; }
.white { color: #e6e6e6; }

/* graph canvas */
.graph {
  flex: 1;
  position: relative;
  overflow: hidden;
  border: 2px solid #3e3e3e;
  background:
    linear-gradient(to right, #161616 1px, transparent 1px) 34px 0 / 112px 112px,
    linear-gradient(to bottom, #161616 1px, transparent 1px) 0 105px / 112px 112px,
    linear-gradient(to right, #343434 1px, transparent 1px) 6px 0 / 14px 14px,
    linear-gradient(to bottom, #343434 1px, transparent 1px) 0 7px / 14px 14px,
    #262626;
}
/* pan offset of the graph's world origin */
.board { position: absolute; inset: -140px 0 0 -390px; }
.vignette { position: absolute; inset: 0; box-shadow: inset 0 0 50px rgba(0,0,0,.5); pointer-events: none; }
.wires { position: absolute; inset: 0; width: 100%; height: 100%; fill: none; stroke-width: 2; }
.stamp { position: absolute; right: 12px; bottom: 8px; font-size: 60px; line-height: 72px; font-weight: 700; color: rgba(255,255,255,.18); }

.crumbs { position: relative; display: flex; height: 42px; }
.star { display: flex; align-items: center; justify-content: center; width: 35px; background: rgba(0,0,0,.6); border-right: 1px solid #777; }
.star svg { width: 20px; height: 20px; }
.crumbrow { flex: 1; display: flex; align-items: center; background: rgba(0,0,0,.55); }
.nav { width: 42px; display: flex; justify-content: center; padding-right: 4px; }
.nav svg { width: 17px; height: 22px; }
.path { display: flex; align-items: center; height: 36px; padding-left: 12px; border-left: 1px solid #777; font-size: 19px; color: #9c9c9c; }
.gi { width: 24px; height: 22px; margin-right: 14px; }
.chev { width: 8px; height: 16px; margin: 0 10px; }
.zoom { margin-left: auto; padding-right: 8px; font-size: 20px; color: #373737; }

.comment {
  position: absolute;
  background: rgba(255,255,255,.31);
  box-shadow: 0 2px 6px rgba(0,0,0,.6), inset 0 0 14px rgba(0,0,0,.3);
  padding: 2px;
}
.comment h2 { height: 33px; padding: 3px 9px; font-size: 21px; line-height: 30px; font-weight: 500; color: #ececec; background: #ababab; text-shadow: 1px 1px 1px #333; border-top: 1px solid #c0c0c0; }
.grip { position: absolute; right: 1px; bottom: 2px; width: 10px; height: 10px; }
.c-top { left: 425px; top: 100px; width: 1218px; height: 104px; }
.c-sprint { left: 426px; top: 260px; width: 1593px; height: 587px; }
.c-run { left: 426px; top: 876px; width: 1329px; height: 378px; }

/* nodes */
.node {
  position: absolute;
  display: flex;
  flex-direction: column;
  border-radius: 5px;
  background: linear-gradient(rgba(32,34,31,.96), rgba(25,27,24,.97));
  box-shadow: inset 0 0 0 1px #0c0c0c, 0 3px 4px rgba(0,0,0,.55);
  color: #e6e6e6;
  font-size: 11px;
  white-space: nowrap;
}
.node.soft { border-radius: 11px; background: linear-gradient(rgba(125,125,125,.9), rgba(72,72,72,.92) 14px, rgba(62,62,62,.94) 60%, rgba(56,56,56,.95)); box-shadow: inset 0 0 0 1px #111, inset 0 2px 1px rgba(255,255,255,.2), inset 0 -2px 1px rgba(0,0,0,.35), 0 3px 4px rgba(0,0,0,.55); }
.node h4 { display: flex; align-items: center; gap: 5px; height: 20px; padding: 0 9px; margin: 1px 1px 0; font-size: 12px; border-radius: 4px 4px 0 0; box-shadow: inset 0 1px 1px rgba(255,255,255,.3); }
.node h4 b, .node h4 i { line-height: 14px; }
.node b { font-weight: 700; }
.node h4.two { height: 35px; align-items: flex-start; padding-top: 2px; gap: 3px; }
.node small { display: block; font-size: 11px; color: #97a582; }
.fn { width: 12px; height: 15px; }
.node .fn { margin-left: 3px; margin-right: 2px; }
.node .two .fn { margin-left: 2px; margin-right: 1px; }
.red { background: linear-gradient(to right, #9a1717, #861a1a 50%, #3d3533); }
.gray { background: linear-gradient(to right, #8a8a8a, #666 40%, #3b3b3b); }
.amber { background: linear-gradient(to right, #9a7b1c, #7a6420 25%, #494844 45%, #3b3c3a); }
.blue { background: radial-gradient(ellipse 34% 60% at 20% 50%, rgba(20,45,65,.8), transparent), linear-gradient(to right, #4a7898, #44728f 42%, #3a5465 58%, #2c383e); }
.blue .fn { color: #7cc3f5; }
.green-h { background: radial-gradient(ellipse 34% 60% at 20% 50%, rgba(28,52,28,.8), transparent), linear-gradient(to right, #598059, #4c6f4b 48%, #324235 68%, #2a332c); }
.green-h .fn { color: #8fe08f; }

.body { display: flex; justify-content: space-between; padding: 3px 11px 0; }
.body p { display: flex; align-items: center; gap: 5px; height: 24px; }
.outs { margin-left: auto; }
.outs p { justify-content: flex-end; gap: 4px; }
.ex { width: 10px; height: 12px; }
.pt { width: 13px; height: 12px; }
.ins .pt { margin-right: -1px; }
.node input[type="checkbox"] { appearance: none; width: 14px; height: 14px; margin-left: 1px; border: 2px solid #ddd; border-radius: 3px; }
.node input[type="checkbox"]:checked { background: linear-gradient(45deg, transparent 30%, #fff 30% 48%, transparent 48%) 0 3px / 6px 7px no-repeat, linear-gradient(-50deg, transparent 40%, #fff 40% 62%, transparent 62%) 2px 0 / 8px 9px no-repeat, #666; }
.w1, .w3, .w4, .w5 { height: 17px; border: 1px solid #d0d0d0 !important; border-radius: 1px; text-align: center; color: #ccc !important; font-size: 11px; }
.w1 { width: 15px; }
.w3 { width: 24px; }
.w4 { width: 28px; }
.w5 { width: 36px; }
.off { margin-left: 4px; }

.teal { color: #22dcab; }
.tealring { color: #2cae8a; }
.dteal { color: #0d5b50; }
.red-pin { color: #8f0505; }
.maroon { color: #760b0b; }
.navy { color: #12489a; }
.sky { color: #1585be; }
.azure { color: #07a0ec; }
.gold { color: #fdc529; }
.lime { color: #8fd93a; }
.limefull { color: #98ff45; }

.getter { justify-content: center; }
.getter p { display: flex; align-items: center; justify-content: flex-end; gap: 5px; padding-right: 12px; }
.node.g-teal { background: radial-gradient(ellipse 45% 70% at 50% 0, rgba(70,190,150,.9), transparent), linear-gradient(#6d6d6d, #444 50%, #383838); }
.node.g-blue { background: radial-gradient(ellipse 50% 80% at 50% 0, rgba(60,150,195,.9), transparent), linear-gradient(#6d6d6d, #444 50%, #383838); }

.node.set, .node.op { display: grid; }
.set > *, .op > * { grid-area: 1 / 1; }
.set h5 { justify-self: center; align-self: start; width: 70%; height: 24px; padding-top: 6px; text-align: center; font-size: 12px; font-weight: 700; }
.set .body { padding: 10px 13px 0; }
.s-teal h5 { background: radial-gradient(ellipse 50% 100% at 50% 0, #43b08c, transparent); }
.s-lime h5 { background: radial-gradient(ellipse 50% 100% at 50% 0, #8ec04e, transparent); }
.op strong { place-self: center; font-size: 17px; line-height: 18px; font-weight: 700; color: #aaa; }
.op strong.big { font-size: 22px; font-weight: 500; }
.sum { width: 12px; height: 12px; justify-self: center; margin-top: 18px; }
.op .body { padding-top: 0; }
.mid { align-self: center; }
.addpin { display: flex; align-items: center; gap: 6px; }

.n-stub { left: 1097px; top: 90px; width: 115px; height: 59px; }
.n-w { left: 467px; top: 568px; width: 82px; height: 99px; }
.n-count { left: 593px; top: 512px; width: 115px; height: 30px; }
.n-gte { left: 831px; top: 512px; width: 106px; height: 51px; }
.n-inc { left: 719px; top: 582px; width: 101px; height: 57px; }
.n-inc .body { padding-top: 10px; }
.n-inc .body p { height: 23px; }
.n-branch { left: 1027px; top: 568px; width: 153px; height: 75px; }
.n-delay { left: 593px; top: 694px; width: 199px; height: 78px; }
.badge { position: absolute; right: -8px; top: -9px; width: 22px; height: 22px; }
.n-setw { left: 915px; top: 708px; width: 136px; height: 64px; }
.n-fwd { left: 1181px; top: 330px; width: 196px; height: 69px; }
.n-loc { left: 1475px; top: 330px; width: 196px; height: 69px; }
.n-mul { left: 1307px; top: 442px; width: 118px; height: 52px; }
.n-add { left: 1545px; top: 456px; width: 127px; height: 51px; }
.n-add .ins { padding-top: 5px; }
.n-add .ins p { height: 20px; }
.n-add .outs { display: flex; flex-direction: column; align-items: flex-end; }
.n-add .addpin { height: 32px; margin-right: -2px; }
.n-time { left: 1265px; top: 554px; width: 213px; height: 200px; }
.n-time .body { padding-top: 2px; }
.n-time .body p:nth-child(odd) { height: 25px; }
.n-lerp { left: 1755px; top: 414px; width: 174px; height: 98px; }
.n-lerp .body { padding-top: 2px; }
.n-setloc { left: 1671px; top: 568px; width: 236px; height: 173px; }
.n-setloc .ins p + p { height: 26px; }
.n-setloc .ins p:last-child { height: 28px; }
.n-shift { left: 467px; top: 974px; width: 90px; height: 99px; }
.n-cm { left: 579px; top: 932px; width: 152px; height: 30px; }
.n-fc { left: 999px; top: 932px; width: 119px; height: 30px; }
.n-set9 { left: 775px; top: 988px; width: 208px; height: 88px; }
.n-set6 { left: 775px; top: 1114px; width: 208px; height: 88px; }
.s-lime .ins p:last-child { height: 28px; }
.n-fov1 { left: 1252px; top: 960px; width: 186px; height: 117px; }
.n-fov2 { left: 1252px; top: 1086px; width: 186px; height: 117px; }

.bubble { position: absolute; left: 1265px; top: 515px; width: 121px; height: 32px; padding: 2px 3px; line-height: 14px; white-space: nowrap; color: #fff; background: linear-gradient(#a98b8b, #b79c9c); border: 1px solid #c9b2b2; border-radius: 3px; }
.bubble::after { content: ""; position: absolute; left: 7px; top: 100%; border: 3px solid transparent; border-top-color: #b79c9c; }

/* details */
.details { display: flex; flex-direction: column; }
.details .panel { display: flex; justify-content: flex-end; align-items: flex-end; padding: 0 8px 7px; }
.source { font: 16px/20px "Liberation Sans", sans-serif; color: #c4c4c4; }
```
